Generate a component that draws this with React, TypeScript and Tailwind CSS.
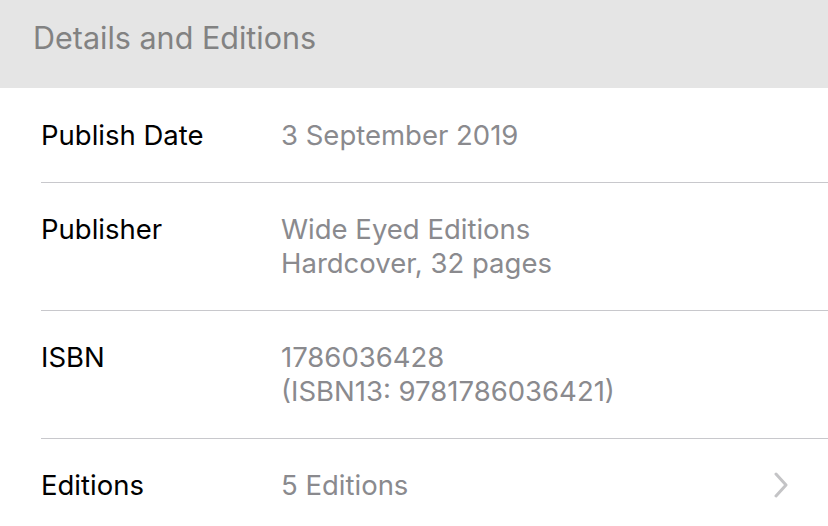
import React from 'react';

interface DetailRow {
  label: string;
  lines: string[];
  link?: boolean;
}

const rows: DetailRow[] = [
  { label: 'Publish Date', lines: ['3 September 2019'] },
  { label: 'Publisher', lines: ['Wide Eyed Editions', 'Hardcover, 32 pages'] },
  { label: 'ISBN', lines: ['1786036428', '(ISBN13: 9781786036421)'] },
  { label: 'Editions', lines: ['5 Editions'], link: true },
];

const Chevron = () => (
  <svg width="16" height="26" viewBox="0 0 16 26" fill="none" className="mr-[39px]">
    <path d="M3 2l10 11-10 11" stroke="#c4c4c6" strokeWidth="3" strokeLinecap="round" strokeLinejoin="round" />
  </svg>
);

export default function App() {
  return (
    <div className="w-[828px] h-[526px] overflow-hidden bg-white" style={{ fontFamily: 'Inter, "Noto Sans", sans-serif' }}>
      {/* section header */}
      <div className="h-[88px] bg-[#e5e5e5] pl-[33px] pt-[18px]">
        <h2 className="text-[30.5px] leading-[40px] text-[#828282]">Details and Editions</h2>
      </div>

      <div className="pl-[41px]">
        {rows.map((row, i) => (
          <div
            key={row.label}
            className={`flex items-center pb-[30px] ${i === 0 ? 'pt-[30px]' : 'pt-[29px]'} ${i < rows.length - 1 ? 'border-b border-[#c8c8cc]' : ''}`}
          >
            <div className="w-[240px] self-start text-[27.5px] leading-[34px] text-black">{row.label}</div>
            <div className="flex-1 text-[27.5px] leading-[34px] text-[#8a8a8e]">
              {row.lines.map((line) => (
                <div key={line}>{line}</div>
              ))}
            </div>
            {row.link && <Chevron />}
          </div>
        ))}
      </div>
    </div>
  );
}
